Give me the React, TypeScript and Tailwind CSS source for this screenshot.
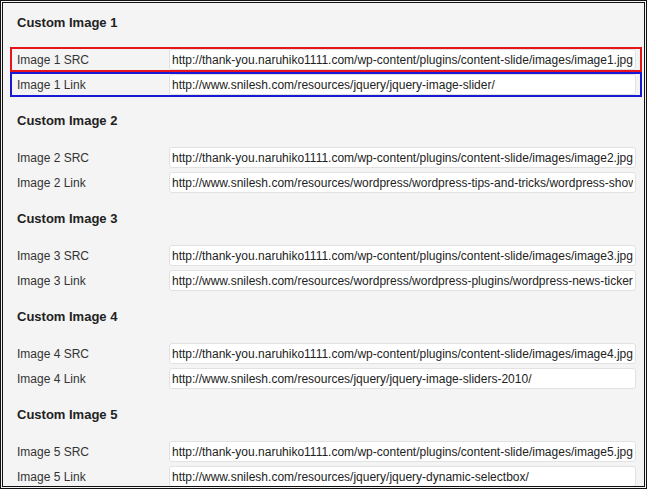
import React from 'react';

type Item = { n: number; src: string; link: string };

const items: Item[] = [
  {
    n: 1,
    src: 'http://thank-you.naruhiko1111.com/wp-content/plugins/content-slide/images/image1.jpg',
    link: 'http://www.snilesh.com/resources/jquery/jquery-image-slider/',
  },
  {
    n: 2,
    src: 'http://thank-you.naruhiko1111.com/wp-content/plugins/content-slide/images/image2.jpg',
    link: 'http://www.snilesh.com/resources/wordpress/wordpress-tips-and-tricks/wordpress-show-',
  },
  {
    n: 3,
    src: 'http://thank-you.naruhiko1111.com/wp-content/plugins/content-slide/images/image3.jpg',
    link: 'http://www.snilesh.com/resources/wordpress/wordpress-plugins/wordpress-news-ticker-plugin/',
  },
  {
    n: 4,
    src: 'http://thank-you.naruhiko1111.com/wp-content/plugins/content-slide/images/image4.jpg',
    link: 'http://www.snilesh.com/resources/jquery/jquery-image-sliders-2010/',
  },
  {
    n: 5,
    src: 'http://thank-you.naruhiko1111.com/wp-content/plugins/content-slide/images/image5.jpg',
    link: 'http://www.snilesh.com/resources/jquery/jquery-dynamic-selectbox/',
  },
];

const Row: React.FC<{ label: string; value: string; ring?: string }> = ({ label, value, ring }) => (
  <div className={`flex items-center h-[25px] border-2 ${ring ?? 'border-transparent'}`}>
    <span className="w-[157px] shrink-0 pl-[5px] text-[12px] text-[#333]">{label}</span>
    <input
      readOnly
      value={value}
      className="flex-1 min-w-0 h-[21px] mr-[4px] px-[2px] bg-white border border-[#e2e2e2] rounded-[3px] text-[12px] text-[#222] outline-none"
      style={{ fontFamily: 'inherit' }}
    />
  </div>
);

export default function App() {
  return (
    <div
      className="w-[647px] h-[489px] border-[3px] border-double border-[#111] bg-[#f4f4f4] overflow-hidden"
      style={{ fontFamily: '"Liberation Sans", "Noto Sans CJK JP", sans-serif' }}
    >
      <div className="pl-[7px] pr-[2px] pt-[10px]">
        {items.map((it) => (
          <div key={it.n} className="h-[98px]">
            <h3 className="h-[20px] leading-[20px] pl-[7px] text-[13px] font-bold text-[#222]">
              Custom Image {it.n}
            </h3>
            <div className="mt-[14px]">
              <Row
                label={`Image ${it.n} SRC`}
                value={it.src}
                ring={it.n === 1 ? 'border-[#e8141b]' : undefined}
              />
              <Row
                label={`Image ${it.n} Link`}
                value={it.link}
                ring={it.n === 1 ? 'border-[#1a1ad6]' : undefined}
              />
            </div>
          </div>
        ))}
      </div>
    </div>
  );
}
